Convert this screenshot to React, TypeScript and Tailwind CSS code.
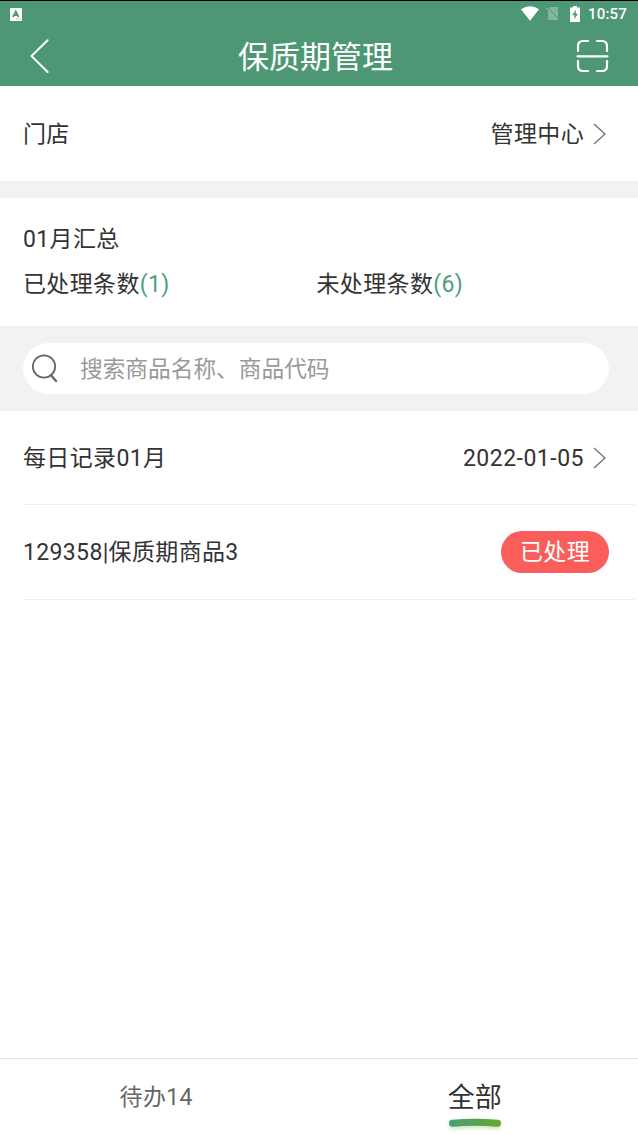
import { useState, type ReactNode } from "react";

const TABS = [
  { id: "todo", label: "待办14" },
  { id: "all", label: "全部" },
];

function StatusBar() {
  return (
    <div className="flex h-[27px] items-center justify-between border-t border-black pr-[11px] pl-[10px]">
      <svg width="12" height="13" viewBox="0 0 12 13">
        <rect width="12" height="13" rx="1" fill="#fff" />
        <path
          d="M3 9 5.8 3.4 8.6 9M4.2 7.2h3.3"
          fill="none"
          stroke="#4d9775"
          strokeWidth="1.8"
        />
        <path d="M6 11h5" stroke="#4d9775" strokeWidth="0.7" opacity="0.6" />
      </svg>
      <div className="flex items-center">
        <svg width="18" height="15" viewBox="0 0 18 15" className="-mt-px mr-[7px]">
          <path d="M0 3.2Q9-2.8 18 3.2L9 14.8Z" fill="#fff" />
        </svg>
        <svg width="13" height="15" viewBox="0 0 13 15" className="-mt-px mr-[11px]">
          <path d="M4.5 1H12v13H2V3.5Z" fill="#fff" opacity="0.3" />
          <path d="M.5 1.3 12.8 14" stroke="#4d9775" strokeWidth="1.8" />
          <path d="M.5 2 12 14" stroke="#fff" strokeWidth="1" opacity="0.5" />
        </svg>
        <svg width="10" height="16" viewBox="0 0 10 16" className="-mt-px mr-[8px]">
          <path d="M3 0h4v1.5h3V16H0V1.5h3Z" fill="#fff" />
          <path d="M6 3.6 2.2 9.2h2.3v4L7.9 7.7H5.6Z" fill="#4d9775" />
        </svg>
        <span className="text-[15px] leading-none font-medium tracking-[0.2px] text-white">
          10:57
        </span>
      </div>
    </div>
  );
}

function Header() {
  return (
    <header className="h-[86px] shrink-0 bg-[#4d9775] text-white">
      <StatusBar />
      <div className="grid h-[58px] grid-cols-[208px_auto_1fr] items-center pr-[29px] pl-[30px]">
        <button type="button" aria-label="返回">
          <svg width="19" height="34" viewBox="0 0 19 34" fill="none">
            <path
              d="M17.6 1.2 1.5 17l16.1 16"
              stroke="#fff"
              strokeWidth="2"
              strokeLinecap="round"
            />
          </svg>
        </button>
        <h1 className="pt-[4px] text-[31px] leading-[46px] tracking-normal whitespace-nowrap">
          保质期管理
        </h1>
        <button type="button" aria-label="扫码" className="justify-self-end">
          <svg
            width="33"
            height="34"
            viewBox="0 0 33 34"
            fill="none"
            stroke="#fff"
            strokeWidth="2.2"
            strokeLinecap="round"
          >
            <path d="M2 12V7q0-5 5-5h5M21 2h5q5 0 5 5v5M31 22v5q0 5-5 5h-5M12 32H7q-5 0-5-5v-5M1.5 17.3h30" />
          </svg>
        </button>
      </div>
    </header>
  );
}

function ChevronRight() {
  return (
    <svg width="13" height="22" viewBox="0 0 13 22" fill="none">
      <path d="M1 1 12 11 1 21" stroke="#777" strokeWidth="1.5" />
    </svg>
  );
}

function LinkRow({ label, children }: { label: string; children: ReactNode }) {
  return (
    <div className="flex flex-1 items-center justify-between pr-[32px] pl-[23px]">
      <span className="pt-[2px]">{label}</span>
      <span className="flex items-center gap-[9px]">
        <span className="pt-[2px]">{children}</span>
        <ChevronRight />
      </span>
    </div>
  );
}

function Count({ label, value }: { label: string; value: number }) {
  return (
    <div>
      {label}
      <span className="text-[#4d9f7a]">({value})</span>
    </div>
  );
}

function SearchBar() {
  return (
    <div className="h-[85px] shrink-0 bg-[#f2f2f2] pt-[17px] pr-[29px] pl-[23px]">
      <label className="flex h-[51px] items-center rounded-full bg-white pl-[9px]">
        <svg width="27" height="29" viewBox="0 0 27 29" fill="none">
          <g stroke="#666" strokeWidth="1.8">
            <circle cx="12" cy="12.5" r="11.2" />
            <path d="m18.2 20.2 6.5 7.5" strokeWidth="2.2" />
          </g>
        </svg>
        <input
          className="ml-[21px] min-w-0 flex-1 pt-[2px] text-[22.7px] tracking-normal outline-none placeholder:text-[#999]"
          placeholder="搜索商品名称、商品代码"
        />
      </label>
    </div>
  );
}

function TabBar() {
  const [active, setActive] = useState("all");

  return (
    <nav className="grid h-[76px] shrink-0 grid-cols-2 border-t border-[#e3e3e3] pr-[5px]">
      {TABS.map((tab) => (
        <button
          key={tab.id}
          type="button"
          className="flex flex-col items-center"
          onClick={() => setActive(tab.id)}
        >
          {tab.id === active ? (
            <>
              <span className="mt-[18px] text-[27px] leading-[42px] tracking-normal">
                {tab.label}
              </span>
              <svg
                width="60"
                height="16"
                viewBox="0 0 60 16"
                fill="none"
                className="-mt-[4px] drop-shadow-[0_2px_2px_rgba(110,165,50,0.35)]"
              >
                <defs>
                  <linearGradient id="tab-underline" x1="4" x2="56" y1="0" y2="0" gradientUnits="userSpaceOnUse">
                    <stop stopColor="#45a077" />
                    <stop offset="1" stopColor="#6aa52f" />
                  </linearGradient>
                </defs>
                <path
                  d="M7.5 8.2Q30 6.5 52.5 8.2"
                  stroke="url(#tab-underline)"
                  strokeWidth="7"
                  strokeLinecap="round"
                />
              </svg>
            </>
          ) : (
            <span className="mt-[22px] mr-[4px] leading-[34px] text-[#666]">
              {tab.label}
            </span>
          )}
        </button>
      ))}
    </nav>
  );
}

export default function App() {
  return (
    <div className="flex h-[1134px] w-[638px] flex-col overflow-hidden bg-white font-[Roboto,'Noto_Sans_CJK_SC',sans-serif] text-[23px] leading-[34px] tracking-[0.35px] text-[#333]">
      <Header />
      <section className="flex h-[95px] shrink-0">
        <LinkRow label="门店">管理中心</LinkRow>
      </section>
      <div className="h-[17px] shrink-0 bg-[#f2f2f2]" />
      <section className="h-[128px] shrink-0 pt-[25px] pr-[28px] pl-[23px]">
        <h2>01月汇总</h2>
        <div className="mt-[11px] grid grid-cols-2">
          <Count label="已处理条数" value={1} />
          <Count label="未处理条数" value={6} />
        </div>
      </section>
      <SearchBar />
      <main className="flex-1">
        <section className="flex h-[93px]">
          <LinkRow label="每日记录01月">
            <span className="tracking-[0.5px]">2022-01-05</span>
          </LinkRow>
        </section>
        <div className="mr-[3px] ml-[23px] flex h-[96px] items-center justify-between border-y-[1.5px] border-[#efefef] pr-[26px]">
          <span className="pt-[2px]">129358|保质期商品3</span>
          <span className="mb-px flex h-[42px] w-[108px] items-center justify-center rounded-full bg-[#fa5e5b] pt-[2px] text-white">
            已处理
          </span>
        </div>
      </main>
      <TabBar />
    </div>
  );
}
